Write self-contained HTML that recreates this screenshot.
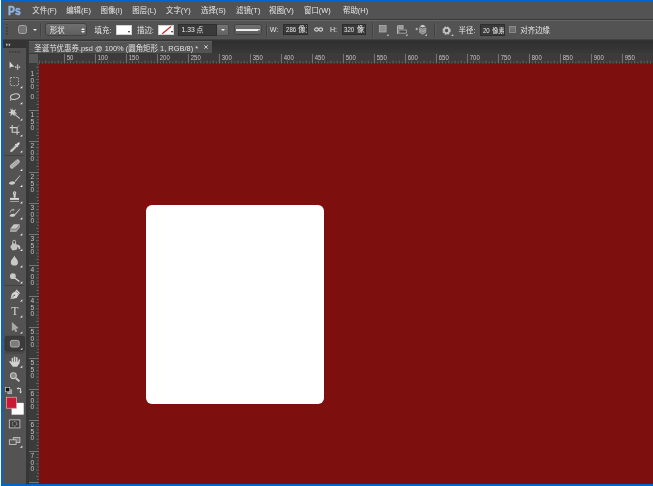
<!DOCTYPE html>
<html lang="zh-CN"><head><meta charset="utf-8"><title>Ps</title><style>
*{margin:0;padding:0;box-sizing:border-box}
html,body{width:653px;height:486px;overflow:hidden;background:#0066cc}
body{position:relative;will-change:transform;font-family:"Liberation Sans","Noto Sans CJK SC",sans-serif;font-size:7.44px;color:#e6e6e6;line-height:1}
.a{position:absolute}
.t{position:absolute;white-space:nowrap;line-height:10px;height:10px}
.sep{position:absolute;width:1px;background:#424242;box-shadow:1px 0 0 #5c5c5c}
.inp{position:absolute;background:#3a3a3a;border:1px solid #2e2e2e;overflow:hidden;white-space:nowrap;line-height:9px;color:#e8e8e8}
.btn{position:absolute;border:1px solid #424242;border-radius:2.5px;background:linear-gradient(#707070,#5e5e5e)}
svg{position:absolute;overflow:visible}
</style></head><body>
<div class="a" style="left:0;top:0;width:1px;height:486px;background:#fff"></div>
<div class="a" style="left:3px;top:2px;width:650px;height:482px;background:#535353"></div>
<div class="t" style="left:7.7px;top:2.9px;font-size:13.6px;line-height:15px;height:15px;color:#8db4e4;font-weight:bold;transform-origin:0 0;transform:scaleX(0.76);-webkit-text-stroke:0.5px #8db4e4">Ps</div>
<div class="t" style="left:32.3px;top:6px">文件(F)</div>
<div class="t" style="left:66.2px;top:6px">编辑(E)</div>
<div class="t" style="left:100.5px;top:6px">图像(I)</div>
<div class="t" style="left:132.3px;top:6px">图层(L)</div>
<div class="t" style="left:166px;top:6px">文字(Y)</div>
<div class="t" style="left:201px;top:6px">选择(S)</div>
<div class="t" style="left:236px;top:6px">滤镜(T)</div>
<div class="t" style="left:269px;top:6px">视图(V)</div>
<div class="t" style="left:304px;top:6px">窗口(W)</div>
<div class="t" style="left:343px;top:6px">帮助(H)</div>
<div class="a" style="left:3px;top:18.8px;width:650px;height:1px;background:#393939"></div>
<div class="a" style="left:3px;top:20.1px;width:650px;height:0.9px;background:#676767"></div>
<div class="a" style="left:6.3px;top:24px;width:1.6px;height:11px;background:repeating-linear-gradient(#424242 0 1.5px,transparent 1.5px 3.1px)"></div>
<div class="a" style="left:18px;top:25.4px;width:9px;height:8.5px;border:1px solid #a6a6a6;border-radius:2.5px;background:#747474"></div>
<div class="a" style="left:32.6px;top:28.8px;width:0;height:0;border-left:2.1px solid transparent;border-right:2.1px solid transparent;border-top:2.6px solid #ececec"></div>
<div class="sep" style="left:39.9px;top:22.8px;height:14.4px"></div>
<div class="btn" style="left:44.6px;top:23.4px;width:42.9px;height:13px;border-radius:3px"></div>
<div class="t" style="left:49.8px;top:25.8px">形状</div>
<div class="a" style="left:80.5px;top:27.6px;width:0;height:0;border-left:2px solid transparent;border-right:2px solid transparent;border-bottom:2.4px solid #efefef"></div>
<div class="a" style="left:80.5px;top:31.2px;width:0;height:0;border-left:2px solid transparent;border-right:2px solid transparent;border-top:2.4px solid #efefef"></div>
<div class="t" style="left:94.6px;top:25.8px">填充:</div>
<div class="a" style="left:115.8px;top:24.7px;width:16.3px;height:10.4px;background:#fff;border:1px solid #d0d0d0"></div>
<div class="a" style="left:128.2px;top:30.8px;width:0;height:0;border-left:1.5px solid transparent;border-right:1.5px solid transparent;border-top:2.1px solid #222"></div>
<div class="t" style="left:137px;top:25.8px">描边:</div>
<div class="a" style="left:157.7px;top:24.7px;width:16.5px;height:10.4px;background:#fff;border:1px solid #d0d0d0"></div>
<svg style="left:157.7px;top:24.7px" width="16.5" height="10.4"><line x1="4.2" y1="8.8" x2="13" y2="1.5" stroke="#cc2a2a" stroke-width="1.25"/></svg>
<div class="a" style="left:170.8px;top:30.8px;width:0;height:0;border-left:1.5px solid transparent;border-right:1.5px solid transparent;border-top:2.1px solid #222"></div>
<div class="inp" style="left:178.1px;top:23.7px;width:39px;height:12.1px;padding-left:2.4px;font-size:6.8px;line-height:10.4px">1.33 点</div>
<div class="a" style="left:216.7px;top:23.7px;width:12.4px;height:12.1px;border-radius:0 2px 2px 0;background:linear-gradient(#747474,#636363);border:1px solid #4a4a4a;border-left:none"></div>
<div class="a" style="left:220.6px;top:29px;width:0;height:0;border-left:2.1px solid transparent;border-right:2.1px solid transparent;border-top:2.5px solid #efefef"></div>
<div class="btn" style="left:233.7px;top:24px;width:28.8px;height:11.3px"></div>
<div class="a" style="left:236px;top:29px;width:21.8px;height:1.6px;background:#ececec"></div>
<div class="a" style="left:257.8px;top:29.1px;width:0;height:0;border-left:1.7px solid transparent;border-right:1.7px solid transparent;border-top:2.1px solid #efefef"></div>
<div class="sep" style="left:265.6px;top:22.8px;height:14.4px"></div>
<div class="t" style="left:269.8px;top:24.8px;font-size:7.1px;color:#e2e2e2">W:</div>
<div class="inp" style="left:283px;top:24px;width:25.1px;height:10.8px;padding-left:2px;line-height:9.6px"><span style="display:inline-block;transform:scale(.82,1.06);transform-origin:0 60%;margin-right:-2.2px">286</span> 像素</div>
<svg style="left:314px;top:27.4px" width="10" height="5"><ellipse cx="2.5" cy="2.5" rx="1.9" ry="1.6" fill="none" stroke="#d4d4d4" stroke-width="1.1"/><ellipse cx="6.7" cy="2.5" rx="1.9" ry="1.6" fill="none" stroke="#d4d4d4" stroke-width="1.1"/></svg>
<div class="t" style="left:329.9px;top:24.8px;font-size:7.1px;color:#e2e2e2">H:</div>
<div class="inp" style="left:342.1px;top:24px;width:24px;height:10.8px;padding-left:1.4px;line-height:9.6px"><span style="display:inline-block;transform:scale(.82,1.06);transform-origin:0 60%;margin-right:-2.2px">320</span> 像素</div>
<div class="sep" style="left:371.9px;top:22.8px;height:14.4px"></div>
<svg style="left:378px;top:24px" width="12" height="12"><rect x="1.3" y="1.5" width="6.8" height="6.5" fill="#8e8e8e" stroke="#b6b6b6" stroke-width="0.7"/><path d="M8.6 11.8h1.9v-1.9z" fill="#ececec"/></svg>
<svg style="left:396px;top:24px" width="13" height="12"><path d="M1.6 1.4v8.6" stroke="#cdcdcd" stroke-width="0.9"/><rect x="2.9" y="1.6" width="4.2" height="3.2" fill="#9a9a9a" stroke="#c4c4c4" stroke-width="0.6"/><rect x="2.9" y="6" width="7.4" height="3.1" fill="#474747" stroke="#c4c4c4" stroke-width="0.7"/><path d="M9.6 11.8h1.9v-1.9z" fill="#ececec"/></svg>
<svg style="left:415px;top:24px" width="13" height="12"><path d="M7.7 0.8l3.1 1.4-3.1 1.400-3.100-1.400z" fill="#cfcfcf"/><path d="M4.600 3.700l3.100 1.400 3.100-1.400v4.800l-3.100 1.700-3.100-1.700z" fill="#8a8a8a" stroke="#b8b8b8" stroke-width="0.600"/><path d="M4.600 6.200l3.100 1.400 3.100-1.400" fill="none" stroke="#c8c8c8" stroke-width="0.500"/><path d="M0.500 5h2.600M1.800 3.800v2.400" stroke="#d0d0d0" stroke-width="0.800"/><path d="M9.900 11.800h1.900v-1.900z" fill="#ececec"/></svg>
<div class="sep" style="left:434.2px;top:22.8px;height:14.4px"></div>
<svg style="left:441.5px;top:25.5px" width="12" height="11"><circle cx="4.6" cy="4.6" r="3" fill="none" stroke="#c2c2c2" stroke-width="2.4" stroke-dasharray="1.5 0.86"/><circle cx="4.6" cy="4.6" r="2.6" fill="none" stroke="#c2c2c2" stroke-width="1.6"/><path d="M9.2 10h2v-2z" fill="#e0e0e0"/></svg>
<div class="t" style="left:458.6px;top:25.8px">半径:</div>
<div class="inp" style="left:480.3px;top:23.8px;width:25.1px;height:11.8px;padding-left:1.5px;padding-top:1.2px;font-size:6.7px;line-height:10.2px"><span style="display:inline-block;transform:scale(.9,1.1);transform-origin:0 60%;margin-right:-0.2px">20</span> 像素</div>
<div class="a" style="left:508.7px;top:25.8px;width:7.5px;height:7.7px;background:linear-gradient(#787878,#666);border:1px solid #8a8a8a"></div>
<div class="t" style="left:520.3px;top:25.8px">对齐边缘</div>
<div class="a" style="left:3px;top:39.2px;width:650px;height:1.8px;background:linear-gradient(#484848,#2d2d2d)"></div>
<div class="a" style="left:26px;top:41px;width:627px;height:12.5px;background:linear-gradient(#2f2f2f,#393939)"></div>
<div class="a" style="left:28.7px;top:41px;width:183.3px;height:12.2px;background:#535353;border-top:1px solid #606060"></div>
<div class="t" style="left:34.3px;top:43.6px;color:#e2e2e2">圣诞节优惠券.psd @ 100% (圆角矩形 1, RGB/8) *</div>
<svg style="left:203.8px;top:45.3px" width="4" height="4"><path d="M0.3 0.3l3.4 3.4M3.7 0.3l-3.4 3.4" stroke="#dedede" stroke-width="0.85"/></svg>
<div class="a" style="left:3px;top:40.6px;width:23.3px;height:7.3px;background:#343434"></div>
<svg style="left:5.5px;top:43px" width="6" height="4"><path d="M0.3 0.3L2 1.8 0.3 3.3zM2.8 0.3L4.5 1.8 2.8 3.3z" fill="#d8d8d8"/></svg>
<div class="a" style="left:3px;top:47.9px;width:23.3px;height:436.1px;background:#535353"></div>
<div class="a" style="left:26.3px;top:40.6px;width:2.5px;height:443.4px;background:#363636"></div>
<svg style="left:9.4px;top:50.9px" width="12" height="2"><path d="M0 0.9h11.6" stroke="#3d3d3d" stroke-width="1.6" stroke-dasharray="0.9 0.62"/></svg>
<svg style="left:0;top:0" width="30" height="486" viewBox="0 0 30 486">
<g fill="#d6d6d6" stroke="none">
<!-- separators -->
<rect x="4.7" y="155" width="19" height="0.9" fill="#404040"/>
<rect x="4.7" y="285" width="19" height="0.9" fill="#404040"/>
<rect x="4.7" y="352.6" width="19" height="0.9" fill="#404040"/>
<!-- corner triangles -->
<g fill="#f6f6f6">
<path d="M22.300 86.0v2.200h-2.200z"/><path d="M22.300 102.0v2.200h-2.200z"/><path d="M22.300 118.4v2.200h-2.200z"/><path d="M22.300 134.4v2.200h-2.200z"/><path d="M22.300 150.4v2.200h-2.200z"/>
<path d="M22.300 168.8v2.200h-2.200z"/><path d="M22.300 184.8v2.200h-2.200z"/><path d="M22.300 201.2v2.200h-2.200z"/><path d="M22.300 217.2v2.200h-2.200z"/><path d="M22.300 233.2v2.200h-2.200z"/><path d="M22.300 248.8v2.200h-2.200z"/><path d="M22.300 265.2v2.200h-2.200z"/><path d="M22.300 281.2v2.200h-2.200z"/>
<path d="M22.300 299.2v2.200h-2.200z"/><path d="M22.300 315.2v2.200h-2.200z"/><path d="M22.300 331.4v2.200h-2.200z"/><path d="M22.300 365.6v2.200h-2.200z"/><path d="M22.300 445.6v2.200h-2.200z"/>
</g>
<!-- move -->
<path d="M9.600 61.400v6.800l1.700-1.500h3z"/>
<path d="M17.600 64.200l1.100 1.300h-.700v1.200h1.200v-.700l1.300 1.100-1.300 1.100v-.700h-1.200v1.200h.700l-1.100 1.300-1.100-1.300h.700v-1.200h-1.200v.700l-1.300-1.100 1.300-1.100v.700h1.200v-1.200h-.700z" fill="#cfcfcf"/>
<!-- marquee -->
<rect x="10.3" y="77.500" width="8.200" height="8.100" fill="none" stroke="#b8b8b8" stroke-width="0.850" stroke-dasharray="1.700 1.100"/>
<!-- lasso -->
<ellipse cx="15" cy="96.6" rx="4.6" ry="2.7" fill="none" stroke="#d0d0d0" stroke-width="1" transform="rotate(-12 15 96.6)"/>
<path d="M11.6 98.6c-1.2.4-1.6 1.6-.6 2.4" fill="none" stroke="#d0d0d0" stroke-width="0.9"/>
<!-- wand -->
<g transform="translate(12.500 112.400) scale(1.400) translate(-12.400 -112.400)"><path d="M12.400 109l.700 2 2-.800-1.100 1.800 1.800 1.200-2.100.100.100 2.100-1.300-1.600-1.700 1.300.600-2-2-.700 2-.700-.700-2 1.700 1.200z" fill="#cdcdcd"/></g>
<path d="M14.200 113.900l5.600 4.700" stroke="#c8c8c8" stroke-width="1.100" fill="none"/>
<!-- crop -->
<path d="M12.200 125v7.300h7.400M9.800 127.600h7.300v7.200" fill="none" stroke="#d0d0d0" stroke-width="1.100"/>
<path d="M19.400 125.200l-3 3" stroke="#bdbdbd" stroke-width="0.600" fill="none"/>
<!-- eyedropper -->
<path d="M19.300 142.300c.800.800.500 1.700-.200 2.400l-1.300 1.300.500.500-.800.800-.500-.500-4.600 4.600-1.700.500-.500-.500.500-1.700 4.600-4.600-.500-.500.800-.800.500.500 1.300-1.300c.700-.700 1.600-1 2.400-.200z"/>
<path d="M11.600 149.700l4.300-4.300" stroke="#5a5a5a" stroke-width="0.600" fill="none"/>
<!-- healing -->
<g transform="rotate(-41 14.800 164)"><rect x="9" y="161.700" width="11.600" height="4.600" rx="2.200" fill="#bcbcbc"/><path d="M11.500 161.800v4.400M13.200 161.800v4.400M14.900 161.800v4.400M16.600 161.800v4.400M18.300 161.800v4.400" stroke="#7a7a7a" stroke-width="0.500"/></g>
<!-- brush -->
<path d="M20 175.200l-5.300 5.800.800.700 5-6.100z" fill="#c4c4c4"/>
<path d="M8.900 183.700c.500-1.700 2.600-2.500 4.600-2.300 1.200.100 1.800.800 1.500 1.700-.600 1.600-3.700 2.200-6.100.600z" fill="#cccccc"/>
<!-- stamp -->
<path d="M14.600 191.300a1.700 1.700 0 0 1 1.700 1.700c0 .800-.600 1.200-.700 2.200l-.100 2.600h-1.800l-.100-2.600c-.100-1-.700-1.400-.700-2.200a1.700 1.700 0 0 1 1.700-1.700z"/>
<circle cx="14.600" cy="193" r="0.700" fill="#6a6a6a"/>
<rect x="10" y="197.900" width="9" height="2"/>
<rect x="10" y="201.100" width="9" height="0.800" fill="#b4b4b4"/>
<!-- history brush -->
<path d="M19.900 208.600l-5.300 5.600.800.700 5-5.900z" fill="#c4c4c4"/>
<path d="M9.600 215.900c.500-1.600 2.400-2.300 4.200-2.100 1.100.100 1.600.800 1.300 1.600-.500 1.400-3.300 2-5.500.500z" fill="#cccccc"/>
<path d="M10 212.400a3.200 3.200 0 0 1 3.400-2.700" fill="none" stroke="#bebebe" stroke-width="0.850"/>
<path d="M12.800 208.600l2 1.300-2.200.900z" fill="#c4c4c4"/>
<!-- eraser -->
<path d="M13.800 224.200h6.100l-3.700 4.600h-6.100z" fill="#c6c6c6"/>
<path d="M10.100 229.200h6.100l3.700-4.600v2.900l-3.700 4.600h-6.100z" fill="#a2a2a2"/>
<!-- bucket -->
<path d="M10.200 246.700l2.800-3.700 5.200 2.100-1.500 4.700-4.300.700z" fill="#c2c2c2"/>
<path d="M12.700 244.600v-2.900a1.450 1.450 0 0 1 2.900 0v2.700" fill="none" stroke="#cccccc" stroke-width="0.900"/>
<path d="M18 244.700c1.600.600 2.400 1.700 2.300 3.700a.950.950 0 0 1-1.800.200c0-1.200-.500-2-1.500-2.500z" fill="#d0d0d0"/>
<!-- blur drop -->
<path d="M14.400 255.800c1.200 2.400 3.600 4.200 3.600 6.400a3.600 3.400 0 0 1-7.200 0c0-2.200 2.400-4 3.600-6.400z" fill="#c9c9c9"/>
<!-- dodge -->
<circle cx="12.900" cy="276.200" r="2.900" fill="#c9c9c9"/>
<path d="M15 278.200l4.400 3.400" stroke="#d6d6d6" stroke-width="1.300" fill="none"/>
<!-- pen -->
<path d="M10.400 299.200l1.600-5.800 3.800-2.400 3.200 3.200-2.400 3.800z"/>
<path d="M10.800 298.800l3.200-3.200" stroke="#535353" stroke-width="0.700"/>
<circle cx="14.300" cy="295.300" r="0.800" fill="#535353"/>
<path d="M16.600 289.600l3.600 3.600-1 .9-3.600-3.600z"/>
<!-- T -->
<text x="11.200" y="315.300" font-family='"Liberation Serif",serif' font-size="11.800" fill="#d6d6d6">T</text>
<!-- path select -->
<path d="M12.200 322.400v8.400l2-1.800 1.500 2.900 1.300-.700-1.500-2.800 2.700-.300z" fill="#a9a9a9" stroke="#c4c4c4" stroke-width="0.400"/>
<!-- selected shape tool -->
<rect x="5" y="336.200" width="19.600" height="15" rx="1.600" fill="#3b3b3b" stroke="#303030" stroke-width="0.600"/>
<rect x="10.400" y="340.400" width="8.800" height="6.600" rx="1.600" fill="#7c7c7c" stroke="#b8b8b8" stroke-width="0.900"/>
<path d="M22.400 347.800v2h-2z" fill="#ededed"/>
<!-- hand -->
<g stroke="#d2d2d2" stroke-width="1.5" stroke-linecap="round" fill="none"><path d="M12.400 358.500v4"/><path d="M14.600 357.200v5"/><path d="M16.800 357.800v4.500"/><path d="M19.300 360l-.700 3.500"/><path d="M10.100 361.700l2.200 2.800"/></g>
<path d="M11.700 361.800h7.500l-.700 2.800-1.300 2.200h-4.400l-1.500-2.800z" fill="#d2d2d2"/>
<!-- zoom -->
<circle cx="13.400" cy="375.700" r="2.900" fill="#868686" stroke="#c6c6c6" stroke-width="1.100"/>
<path d="M15.900 378.200l3.600 3.200" stroke="#cecece" stroke-width="1.900" fill="none"/>
<!-- default colours -->
<rect x="7.800" y="389.800" width="4" height="4" fill="#9a9a9a" stroke="#c8c8c8" stroke-width="0.500"/>
<rect x="5.600" y="387.600" width="4.200" height="4.200" fill="#111" stroke="#d8d8d8" stroke-width="0.600"/>
<!-- swap arrows -->
<path d="M18.400 388.400h2.200v3.200" fill="none" stroke="#e0e0e0" stroke-width="0.900"/>
<path d="M16.600 388.400l2-1.400v2.800zM20.600 393.400l-1.400-2h2.800z" fill="#e0e0e0"/>
<!-- colour swatches -->
<rect x="11.800" y="403" width="11.900" height="11.600" fill="#fff" stroke="#dcdcdc" stroke-width="0.300"/>
<rect x="6.100" y="396.900" width="10.600" height="11.600" fill="#c81a34"/>
<rect x="6.400" y="397.200" width="10" height="11" fill="none" stroke="#e6c8cc" stroke-width="0.600"/>
<!-- quick mask -->
<rect x="9.300" y="419.900" width="10.600" height="8" fill="#3e3e3e" stroke="#cfcfcf" stroke-width="0.800"/>
<circle cx="14.600" cy="423.900" r="2.300" fill="none" stroke="#c8c8c8" stroke-width="0.800" stroke-dasharray="1.300 1"/>
<!-- screen mode -->
<rect x="13.300" y="437.600" width="6.600" height="5" fill="#777" stroke="#cfcfcf" stroke-width="0.800"/>
<rect x="9.300" y="439.800" width="6.800" height="4.800" fill="#5a5a5a" stroke="#cfcfcf" stroke-width="0.800"/>
</g>
</svg>

<div class="a" style="left:28.8px;top:53.4px;width:624.2px;height:10.2px;background:#3b3b3b"></div>
<div class="a" style="left:28.8px;top:63.4px;width:10.2px;height:420.6px;background:#3b3b3b"></div>
<div class="a" style="left:28.8px;top:53.6px;width:9.6px;height:9.5px;background:#585858"></div>
<div class="a" style="left:38.8px;top:63.3px;width:614.2px;height:420.7px;background:#7d100f"></div>
<div class="a" style="left:146px;top:204.5px;width:177.5px;height:199px;background:#fff;border-radius:6px"></div>
<svg style="left:0;top:0" width="653" height="486"><rect x="39.20" y="60.6" width="0.8" height="3" fill="#7c7c7c" opacity="0.8"/><rect x="42.30" y="61.6" width="0.8" height="2" fill="#7c7c7c" opacity="0.7"/><rect x="45.40" y="60.6" width="0.8" height="3" fill="#7c7c7c" opacity="0.8"/><rect x="48.50" y="61.6" width="0.8" height="2" fill="#7c7c7c" opacity="0.7"/><rect x="51.60" y="60.6" width="0.8" height="3" fill="#7c7c7c" opacity="0.8"/><rect x="54.70" y="61.6" width="0.8" height="2" fill="#7c7c7c" opacity="0.7"/><rect x="57.80" y="60.6" width="0.8" height="3" fill="#7c7c7c" opacity="0.8"/><rect x="60.90" y="61.6" width="0.8" height="2" fill="#7c7c7c" opacity="0.7"/><rect x="63.95" y="53.9" width="0.9" height="9.6" fill="#7c7c7c"/><rect x="67.10" y="61.6" width="0.8" height="2" fill="#7c7c7c" opacity="0.7"/><rect x="70.20" y="60.6" width="0.8" height="3" fill="#7c7c7c" opacity="0.8"/><rect x="73.30" y="61.6" width="0.8" height="2" fill="#7c7c7c" opacity="0.7"/><rect x="76.40" y="60.6" width="0.8" height="3" fill="#7c7c7c" opacity="0.8"/><rect x="79.50" y="61.6" width="0.8" height="2" fill="#7c7c7c" opacity="0.7"/><rect x="82.60" y="60.6" width="0.8" height="3" fill="#7c7c7c" opacity="0.8"/><rect x="85.70" y="61.6" width="0.8" height="2" fill="#7c7c7c" opacity="0.7"/><rect x="88.80" y="60.6" width="0.8" height="3" fill="#7c7c7c" opacity="0.8"/><rect x="91.90" y="61.6" width="0.8" height="2" fill="#7c7c7c" opacity="0.7"/><rect x="94.95" y="53.9" width="0.9" height="9.6" fill="#7c7c7c"/><rect x="98.10" y="61.6" width="0.8" height="2" fill="#7c7c7c" opacity="0.7"/><rect x="101.20" y="60.6" width="0.8" height="3" fill="#7c7c7c" opacity="0.8"/><rect x="104.30" y="61.6" width="0.8" height="2" fill="#7c7c7c" opacity="0.7"/><rect x="107.40" y="60.6" width="0.8" height="3" fill="#7c7c7c" opacity="0.8"/><rect x="110.50" y="61.6" width="0.8" height="2" fill="#7c7c7c" opacity="0.7"/><rect x="113.60" y="60.6" width="0.8" height="3" fill="#7c7c7c" opacity="0.8"/><rect x="116.70" y="61.6" width="0.8" height="2" fill="#7c7c7c" opacity="0.7"/><rect x="119.80" y="60.6" width="0.8" height="3" fill="#7c7c7c" opacity="0.8"/><rect x="122.90" y="61.6" width="0.8" height="2" fill="#7c7c7c" opacity="0.7"/><rect x="125.95" y="53.9" width="0.9" height="9.6" fill="#7c7c7c"/><rect x="129.10" y="61.6" width="0.8" height="2" fill="#7c7c7c" opacity="0.7"/><rect x="132.20" y="60.6" width="0.8" height="3" fill="#7c7c7c" opacity="0.8"/><rect x="135.30" y="61.6" width="0.8" height="2" fill="#7c7c7c" opacity="0.7"/><rect x="138.40" y="60.6" width="0.8" height="3" fill="#7c7c7c" opacity="0.8"/><rect x="141.50" y="61.6" width="0.8" height="2" fill="#7c7c7c" opacity="0.7"/><rect x="144.60" y="60.6" width="0.8" height="3" fill="#7c7c7c" opacity="0.8"/><rect x="147.70" y="61.6" width="0.8" height="2" fill="#7c7c7c" opacity="0.7"/><rect x="150.80" y="60.6" width="0.8" height="3" fill="#7c7c7c" opacity="0.8"/><rect x="153.90" y="61.6" width="0.8" height="2" fill="#7c7c7c" opacity="0.7"/><rect x="156.95" y="53.9" width="0.9" height="9.6" fill="#7c7c7c"/><rect x="160.10" y="61.6" width="0.8" height="2" fill="#7c7c7c" opacity="0.7"/><rect x="163.20" y="60.6" width="0.8" height="3" fill="#7c7c7c" opacity="0.8"/><rect x="166.30" y="61.6" width="0.8" height="2" fill="#7c7c7c" opacity="0.7"/><rect x="169.40" y="60.6" width="0.8" height="3" fill="#7c7c7c" opacity="0.8"/><rect x="172.50" y="61.6" width="0.8" height="2" fill="#7c7c7c" opacity="0.7"/><rect x="175.60" y="60.6" width="0.8" height="3" fill="#7c7c7c" opacity="0.8"/><rect x="178.70" y="61.6" width="0.8" height="2" fill="#7c7c7c" opacity="0.7"/><rect x="181.80" y="60.6" width="0.8" height="3" fill="#7c7c7c" opacity="0.8"/><rect x="184.90" y="61.6" width="0.8" height="2" fill="#7c7c7c" opacity="0.7"/><rect x="187.95" y="53.9" width="0.9" height="9.6" fill="#7c7c7c"/><rect x="191.10" y="61.6" width="0.8" height="2" fill="#7c7c7c" opacity="0.7"/><rect x="194.20" y="60.6" width="0.8" height="3" fill="#7c7c7c" opacity="0.8"/><rect x="197.30" y="61.6" width="0.8" height="2" fill="#7c7c7c" opacity="0.7"/><rect x="200.40" y="60.6" width="0.8" height="3" fill="#7c7c7c" opacity="0.8"/><rect x="203.50" y="61.6" width="0.8" height="2" fill="#7c7c7c" opacity="0.7"/><rect x="206.60" y="60.6" width="0.8" height="3" fill="#7c7c7c" opacity="0.8"/><rect x="209.70" y="61.6" width="0.8" height="2" fill="#7c7c7c" opacity="0.7"/><rect x="212.80" y="60.6" width="0.8" height="3" fill="#7c7c7c" opacity="0.8"/><rect x="215.90" y="61.6" width="0.8" height="2" fill="#7c7c7c" opacity="0.7"/><rect x="218.95" y="53.9" width="0.9" height="9.6" fill="#7c7c7c"/><rect x="222.10" y="61.6" width="0.8" height="2" fill="#7c7c7c" opacity="0.7"/><rect x="225.20" y="60.6" width="0.8" height="3" fill="#7c7c7c" opacity="0.8"/><rect x="228.30" y="61.6" width="0.8" height="2" fill="#7c7c7c" opacity="0.7"/><rect x="231.40" y="60.6" width="0.8" height="3" fill="#7c7c7c" opacity="0.8"/><rect x="234.50" y="61.6" width="0.8" height="2" fill="#7c7c7c" opacity="0.7"/><rect x="237.60" y="60.6" width="0.8" height="3" fill="#7c7c7c" opacity="0.8"/><rect x="240.70" y="61.6" width="0.8" height="2" fill="#7c7c7c" opacity="0.7"/><rect x="243.80" y="60.6" width="0.8" height="3" fill="#7c7c7c" opacity="0.8"/><rect x="246.90" y="61.6" width="0.8" height="2" fill="#7c7c7c" opacity="0.7"/><rect x="249.95" y="53.9" width="0.9" height="9.6" fill="#7c7c7c"/><rect x="253.10" y="61.6" width="0.8" height="2" fill="#7c7c7c" opacity="0.7"/><rect x="256.20" y="60.6" width="0.8" height="3" fill="#7c7c7c" opacity="0.8"/><rect x="259.30" y="61.6" width="0.8" height="2" fill="#7c7c7c" opacity="0.7"/><rect x="262.40" y="60.6" width="0.8" height="3" fill="#7c7c7c" opacity="0.8"/><rect x="265.50" y="61.6" width="0.8" height="2" fill="#7c7c7c" opacity="0.7"/><rect x="268.60" y="60.6" width="0.8" height="3" fill="#7c7c7c" opacity="0.8"/><rect x="271.70" y="61.6" width="0.8" height="2" fill="#7c7c7c" opacity="0.7"/><rect x="274.80" y="60.6" width="0.8" height="3" fill="#7c7c7c" opacity="0.8"/><rect x="277.90" y="61.6" width="0.8" height="2" fill="#7c7c7c" opacity="0.7"/><rect x="280.95" y="53.9" width="0.9" height="9.6" fill="#7c7c7c"/><rect x="284.10" y="61.6" width="0.8" height="2" fill="#7c7c7c" opacity="0.7"/><rect x="287.20" y="60.6" width="0.8" height="3" fill="#7c7c7c" opacity="0.8"/><rect x="290.30" y="61.6" width="0.8" height="2" fill="#7c7c7c" opacity="0.7"/><rect x="293.40" y="60.6" width="0.8" height="3" fill="#7c7c7c" opacity="0.8"/><rect x="296.50" y="61.6" width="0.8" height="2" fill="#7c7c7c" opacity="0.7"/><rect x="299.60" y="60.6" width="0.8" height="3" fill="#7c7c7c" opacity="0.8"/><rect x="302.70" y="61.6" width="0.8" height="2" fill="#7c7c7c" opacity="0.7"/><rect x="305.80" y="60.6" width="0.8" height="3" fill="#7c7c7c" opacity="0.8"/><rect x="308.90" y="61.6" width="0.8" height="2" fill="#7c7c7c" opacity="0.7"/><rect x="311.95" y="53.9" width="0.9" height="9.6" fill="#7c7c7c"/><rect x="315.10" y="61.6" width="0.8" height="2" fill="#7c7c7c" opacity="0.7"/><rect x="318.20" y="60.6" width="0.8" height="3" fill="#7c7c7c" opacity="0.8"/><rect x="321.30" y="61.6" width="0.8" height="2" fill="#7c7c7c" opacity="0.7"/><rect x="324.40" y="60.6" width="0.8" height="3" fill="#7c7c7c" opacity="0.8"/><rect x="327.50" y="61.6" width="0.8" height="2" fill="#7c7c7c" opacity="0.7"/><rect x="330.60" y="60.6" width="0.8" height="3" fill="#7c7c7c" opacity="0.8"/><rect x="333.70" y="61.6" width="0.8" height="2" fill="#7c7c7c" opacity="0.7"/><rect x="336.80" y="60.6" width="0.8" height="3" fill="#7c7c7c" opacity="0.8"/><rect x="339.90" y="61.6" width="0.8" height="2" fill="#7c7c7c" opacity="0.7"/><rect x="342.95" y="53.9" width="0.9" height="9.6" fill="#7c7c7c"/><rect x="346.10" y="61.6" width="0.8" height="2" fill="#7c7c7c" opacity="0.7"/><rect x="349.20" y="60.6" width="0.8" height="3" fill="#7c7c7c" opacity="0.8"/><rect x="352.30" y="61.6" width="0.8" height="2" fill="#7c7c7c" opacity="0.7"/><rect x="355.40" y="60.6" width="0.8" height="3" fill="#7c7c7c" opacity="0.8"/><rect x="358.50" y="61.6" width="0.8" height="2" fill="#7c7c7c" opacity="0.7"/><rect x="361.60" y="60.6" width="0.8" height="3" fill="#7c7c7c" opacity="0.8"/><rect x="364.70" y="61.6" width="0.8" height="2" fill="#7c7c7c" opacity="0.7"/><rect x="367.80" y="60.6" width="0.8" height="3" fill="#7c7c7c" opacity="0.8"/><rect x="370.90" y="61.6" width="0.8" height="2" fill="#7c7c7c" opacity="0.7"/><rect x="373.95" y="53.9" width="0.9" height="9.6" fill="#7c7c7c"/><rect x="377.10" y="61.6" width="0.8" height="2" fill="#7c7c7c" opacity="0.7"/><rect x="380.20" y="60.6" width="0.8" height="3" fill="#7c7c7c" opacity="0.8"/><rect x="383.30" y="61.6" width="0.8" height="2" fill="#7c7c7c" opacity="0.7"/><rect x="386.40" y="60.6" width="0.8" height="3" fill="#7c7c7c" opacity="0.8"/><rect x="389.50" y="61.6" width="0.8" height="2" fill="#7c7c7c" opacity="0.7"/><rect x="392.60" y="60.6" width="0.8" height="3" fill="#7c7c7c" opacity="0.8"/><rect x="395.70" y="61.6" width="0.8" height="2" fill="#7c7c7c" opacity="0.7"/><rect x="398.80" y="60.6" width="0.8" height="3" fill="#7c7c7c" opacity="0.8"/><rect x="401.90" y="61.6" width="0.8" height="2" fill="#7c7c7c" opacity="0.7"/><rect x="404.95" y="53.9" width="0.9" height="9.6" fill="#7c7c7c"/><rect x="408.10" y="61.6" width="0.8" height="2" fill="#7c7c7c" opacity="0.7"/><rect x="411.20" y="60.6" width="0.8" height="3" fill="#7c7c7c" opacity="0.8"/><rect x="414.30" y="61.6" width="0.8" height="2" fill="#7c7c7c" opacity="0.7"/><rect x="417.40" y="60.6" width="0.8" height="3" fill="#7c7c7c" opacity="0.8"/><rect x="420.50" y="61.6" width="0.8" height="2" fill="#7c7c7c" opacity="0.7"/><rect x="423.60" y="60.6" width="0.8" height="3" fill="#7c7c7c" opacity="0.8"/><rect x="426.70" y="61.6" width="0.8" height="2" fill="#7c7c7c" opacity="0.7"/><rect x="429.80" y="60.6" width="0.8" height="3" fill="#7c7c7c" opacity="0.8"/><rect x="432.90" y="61.6" width="0.8" height="2" fill="#7c7c7c" opacity="0.7"/><rect x="435.95" y="53.9" width="0.9" height="9.6" fill="#7c7c7c"/><rect x="439.10" y="61.6" width="0.8" height="2" fill="#7c7c7c" opacity="0.7"/><rect x="442.20" y="60.6" width="0.8" height="3" fill="#7c7c7c" opacity="0.8"/><rect x="445.30" y="61.6" width="0.8" height="2" fill="#7c7c7c" opacity="0.7"/><rect x="448.40" y="60.6" width="0.8" height="3" fill="#7c7c7c" opacity="0.8"/><rect x="451.50" y="61.6" width="0.8" height="2" fill="#7c7c7c" opacity="0.7"/><rect x="454.60" y="60.6" width="0.8" height="3" fill="#7c7c7c" opacity="0.8"/><rect x="457.70" y="61.6" width="0.8" height="2" fill="#7c7c7c" opacity="0.7"/><rect x="460.80" y="60.6" width="0.8" height="3" fill="#7c7c7c" opacity="0.8"/><rect x="463.90" y="61.6" width="0.8" height="2" fill="#7c7c7c" opacity="0.7"/><rect x="466.95" y="53.9" width="0.9" height="9.6" fill="#7c7c7c"/><rect x="470.10" y="61.6" width="0.8" height="2" fill="#7c7c7c" opacity="0.7"/><rect x="473.20" y="60.6" width="0.8" height="3" fill="#7c7c7c" opacity="0.8"/><rect x="476.30" y="61.6" width="0.8" height="2" fill="#7c7c7c" opacity="0.7"/><rect x="479.40" y="60.6" width="0.8" height="3" fill="#7c7c7c" opacity="0.8"/><rect x="482.50" y="61.6" width="0.8" height="2" fill="#7c7c7c" opacity="0.7"/><rect x="485.60" y="60.6" width="0.8" height="3" fill="#7c7c7c" opacity="0.8"/><rect x="488.70" y="61.6" width="0.8" height="2" fill="#7c7c7c" opacity="0.7"/><rect x="491.80" y="60.6" width="0.8" height="3" fill="#7c7c7c" opacity="0.8"/><rect x="494.90" y="61.6" width="0.8" height="2" fill="#7c7c7c" opacity="0.7"/><rect x="497.95" y="53.9" width="0.9" height="9.6" fill="#7c7c7c"/><rect x="501.10" y="61.6" width="0.8" height="2" fill="#7c7c7c" opacity="0.7"/><rect x="504.20" y="60.6" width="0.8" height="3" fill="#7c7c7c" opacity="0.8"/><rect x="507.30" y="61.6" width="0.8" height="2" fill="#7c7c7c" opacity="0.7"/><rect x="510.40" y="60.6" width="0.8" height="3" fill="#7c7c7c" opacity="0.8"/><rect x="513.50" y="61.6" width="0.8" height="2" fill="#7c7c7c" opacity="0.7"/><rect x="516.60" y="60.6" width="0.8" height="3" fill="#7c7c7c" opacity="0.8"/><rect x="519.70" y="61.6" width="0.8" height="2" fill="#7c7c7c" opacity="0.7"/><rect x="522.80" y="60.6" width="0.8" height="3" fill="#7c7c7c" opacity="0.8"/><rect x="525.90" y="61.6" width="0.8" height="2" fill="#7c7c7c" opacity="0.7"/><rect x="528.95" y="53.9" width="0.9" height="9.6" fill="#7c7c7c"/><rect x="532.10" y="61.6" width="0.8" height="2" fill="#7c7c7c" opacity="0.7"/><rect x="535.20" y="60.6" width="0.8" height="3" fill="#7c7c7c" opacity="0.8"/><rect x="538.30" y="61.6" width="0.8" height="2" fill="#7c7c7c" opacity="0.7"/><rect x="541.40" y="60.6" width="0.8" height="3" fill="#7c7c7c" opacity="0.8"/><rect x="544.50" y="61.6" width="0.8" height="2" fill="#7c7c7c" opacity="0.7"/><rect x="547.60" y="60.6" width="0.8" height="3" fill="#7c7c7c" opacity="0.8"/><rect x="550.70" y="61.6" width="0.8" height="2" fill="#7c7c7c" opacity="0.7"/><rect x="553.80" y="60.6" width="0.8" height="3" fill="#7c7c7c" opacity="0.8"/><rect x="556.90" y="61.6" width="0.8" height="2" fill="#7c7c7c" opacity="0.7"/><rect x="559.95" y="53.9" width="0.9" height="9.6" fill="#7c7c7c"/><rect x="563.10" y="61.6" width="0.8" height="2" fill="#7c7c7c" opacity="0.7"/><rect x="566.20" y="60.6" width="0.8" height="3" fill="#7c7c7c" opacity="0.8"/><rect x="569.30" y="61.6" width="0.8" height="2" fill="#7c7c7c" opacity="0.7"/><rect x="572.40" y="60.6" width="0.8" height="3" fill="#7c7c7c" opacity="0.8"/><rect x="575.50" y="61.6" width="0.8" height="2" fill="#7c7c7c" opacity="0.7"/><rect x="578.60" y="60.6" width="0.8" height="3" fill="#7c7c7c" opacity="0.8"/><rect x="581.70" y="61.6" width="0.8" height="2" fill="#7c7c7c" opacity="0.7"/><rect x="584.80" y="60.6" width="0.8" height="3" fill="#7c7c7c" opacity="0.8"/><rect x="587.90" y="61.6" width="0.8" height="2" fill="#7c7c7c" opacity="0.7"/><rect x="590.95" y="53.9" width="0.9" height="9.6" fill="#7c7c7c"/><rect x="594.10" y="61.6" width="0.8" height="2" fill="#7c7c7c" opacity="0.7"/><rect x="597.20" y="60.6" width="0.8" height="3" fill="#7c7c7c" opacity="0.8"/><rect x="600.30" y="61.6" width="0.8" height="2" fill="#7c7c7c" opacity="0.7"/><rect x="603.40" y="60.6" width="0.8" height="3" fill="#7c7c7c" opacity="0.8"/><rect x="606.50" y="61.6" width="0.8" height="2" fill="#7c7c7c" opacity="0.7"/><rect x="609.60" y="60.6" width="0.8" height="3" fill="#7c7c7c" opacity="0.8"/><rect x="612.70" y="61.6" width="0.8" height="2" fill="#7c7c7c" opacity="0.7"/><rect x="615.80" y="60.6" width="0.8" height="3" fill="#7c7c7c" opacity="0.8"/><rect x="618.90" y="61.6" width="0.8" height="2" fill="#7c7c7c" opacity="0.7"/><rect x="621.95" y="53.9" width="0.9" height="9.6" fill="#7c7c7c"/><rect x="625.10" y="61.6" width="0.8" height="2" fill="#7c7c7c" opacity="0.7"/><rect x="628.20" y="60.6" width="0.8" height="3" fill="#7c7c7c" opacity="0.8"/><rect x="631.30" y="61.6" width="0.8" height="2" fill="#7c7c7c" opacity="0.7"/><rect x="634.40" y="60.6" width="0.8" height="3" fill="#7c7c7c" opacity="0.8"/><rect x="637.50" y="61.6" width="0.8" height="2" fill="#7c7c7c" opacity="0.7"/><rect x="640.60" y="60.6" width="0.8" height="3" fill="#7c7c7c" opacity="0.8"/><rect x="643.70" y="61.6" width="0.8" height="2" fill="#7c7c7c" opacity="0.7"/><rect x="646.80" y="60.6" width="0.8" height="3" fill="#7c7c7c" opacity="0.8"/><rect x="649.90" y="61.6" width="0.8" height="2" fill="#7c7c7c" opacity="0.7"/><rect x="37" y="63.60" width="2" height="0.8" fill="#7c7c7c" opacity="0.7"/><rect x="36" y="66.70" width="3" height="0.8" fill="#7c7c7c" opacity="0.8"/><rect x="37" y="69.80" width="2" height="0.8" fill="#7c7c7c" opacity="0.7"/><rect x="36" y="72.90" width="3" height="0.8" fill="#7c7c7c" opacity="0.8"/><rect x="37" y="76.00" width="2" height="0.8" fill="#7c7c7c" opacity="0.7"/><rect x="36" y="79.10" width="3" height="0.8" fill="#7c7c7c" opacity="0.8"/><rect x="37" y="82.20" width="2" height="0.8" fill="#7c7c7c" opacity="0.7"/><rect x="36" y="85.30" width="3" height="0.8" fill="#7c7c7c" opacity="0.8"/><rect x="37" y="88.40" width="2" height="0.8" fill="#7c7c7c" opacity="0.7"/><rect x="36" y="91.50" width="3" height="0.8" fill="#7c7c7c" opacity="0.8"/><rect x="37" y="94.60" width="2" height="0.8" fill="#7c7c7c" opacity="0.7"/><rect x="36" y="97.70" width="3" height="0.8" fill="#7c7c7c" opacity="0.8"/><rect x="37" y="100.80" width="2" height="0.8" fill="#7c7c7c" opacity="0.7"/><rect x="36" y="103.90" width="3" height="0.8" fill="#7c7c7c" opacity="0.8"/><rect x="37" y="107.00" width="2" height="0.8" fill="#7c7c7c" opacity="0.7"/><rect x="29" y="110.05" width="10" height="0.9" fill="#7c7c7c"/><rect x="37" y="113.20" width="2" height="0.8" fill="#7c7c7c" opacity="0.7"/><rect x="36" y="116.30" width="3" height="0.8" fill="#7c7c7c" opacity="0.8"/><rect x="37" y="119.40" width="2" height="0.8" fill="#7c7c7c" opacity="0.7"/><rect x="36" y="122.50" width="3" height="0.8" fill="#7c7c7c" opacity="0.8"/><rect x="37" y="125.60" width="2" height="0.8" fill="#7c7c7c" opacity="0.7"/><rect x="36" y="128.70" width="3" height="0.8" fill="#7c7c7c" opacity="0.8"/><rect x="37" y="131.80" width="2" height="0.8" fill="#7c7c7c" opacity="0.7"/><rect x="36" y="134.90" width="3" height="0.8" fill="#7c7c7c" opacity="0.8"/><rect x="37" y="138.00" width="2" height="0.8" fill="#7c7c7c" opacity="0.7"/><rect x="29" y="141.05" width="10" height="0.9" fill="#7c7c7c"/><rect x="37" y="144.20" width="2" height="0.8" fill="#7c7c7c" opacity="0.7"/><rect x="36" y="147.30" width="3" height="0.8" fill="#7c7c7c" opacity="0.8"/><rect x="37" y="150.40" width="2" height="0.8" fill="#7c7c7c" opacity="0.7"/><rect x="36" y="153.50" width="3" height="0.8" fill="#7c7c7c" opacity="0.8"/><rect x="37" y="156.60" width="2" height="0.8" fill="#7c7c7c" opacity="0.7"/><rect x="36" y="159.70" width="3" height="0.8" fill="#7c7c7c" opacity="0.8"/><rect x="37" y="162.80" width="2" height="0.8" fill="#7c7c7c" opacity="0.7"/><rect x="36" y="165.90" width="3" height="0.8" fill="#7c7c7c" opacity="0.8"/><rect x="37" y="169.00" width="2" height="0.8" fill="#7c7c7c" opacity="0.7"/><rect x="29" y="172.05" width="10" height="0.9" fill="#7c7c7c"/><rect x="37" y="175.20" width="2" height="0.8" fill="#7c7c7c" opacity="0.7"/><rect x="36" y="178.30" width="3" height="0.8" fill="#7c7c7c" opacity="0.8"/><rect x="37" y="181.40" width="2" height="0.8" fill="#7c7c7c" opacity="0.7"/><rect x="36" y="184.50" width="3" height="0.8" fill="#7c7c7c" opacity="0.8"/><rect x="37" y="187.60" width="2" height="0.8" fill="#7c7c7c" opacity="0.7"/><rect x="36" y="190.70" width="3" height="0.8" fill="#7c7c7c" opacity="0.8"/><rect x="37" y="193.80" width="2" height="0.8" fill="#7c7c7c" opacity="0.7"/><rect x="36" y="196.90" width="3" height="0.8" fill="#7c7c7c" opacity="0.8"/><rect x="37" y="200.00" width="2" height="0.8" fill="#7c7c7c" opacity="0.7"/><rect x="29" y="203.05" width="10" height="0.9" fill="#7c7c7c"/><rect x="37" y="206.20" width="2" height="0.8" fill="#7c7c7c" opacity="0.7"/><rect x="36" y="209.30" width="3" height="0.8" fill="#7c7c7c" opacity="0.8"/><rect x="37" y="212.40" width="2" height="0.8" fill="#7c7c7c" opacity="0.7"/><rect x="36" y="215.50" width="3" height="0.8" fill="#7c7c7c" opacity="0.8"/><rect x="37" y="218.60" width="2" height="0.8" fill="#7c7c7c" opacity="0.7"/><rect x="36" y="221.70" width="3" height="0.8" fill="#7c7c7c" opacity="0.8"/><rect x="37" y="224.80" width="2" height="0.8" fill="#7c7c7c" opacity="0.7"/><rect x="36" y="227.90" width="3" height="0.8" fill="#7c7c7c" opacity="0.8"/><rect x="37" y="231.00" width="2" height="0.8" fill="#7c7c7c" opacity="0.7"/><rect x="29" y="234.05" width="10" height="0.9" fill="#7c7c7c"/><rect x="37" y="237.20" width="2" height="0.8" fill="#7c7c7c" opacity="0.7"/><rect x="36" y="240.30" width="3" height="0.8" fill="#7c7c7c" opacity="0.8"/><rect x="37" y="243.40" width="2" height="0.8" fill="#7c7c7c" opacity="0.7"/><rect x="36" y="246.50" width="3" height="0.8" fill="#7c7c7c" opacity="0.8"/><rect x="37" y="249.60" width="2" height="0.8" fill="#7c7c7c" opacity="0.7"/><rect x="36" y="252.70" width="3" height="0.8" fill="#7c7c7c" opacity="0.8"/><rect x="37" y="255.80" width="2" height="0.8" fill="#7c7c7c" opacity="0.7"/><rect x="36" y="258.90" width="3" height="0.8" fill="#7c7c7c" opacity="0.8"/><rect x="37" y="262.00" width="2" height="0.8" fill="#7c7c7c" opacity="0.7"/><rect x="29" y="265.05" width="10" height="0.9" fill="#7c7c7c"/><rect x="37" y="268.20" width="2" height="0.8" fill="#7c7c7c" opacity="0.7"/><rect x="36" y="271.30" width="3" height="0.8" fill="#7c7c7c" opacity="0.8"/><rect x="37" y="274.40" width="2" height="0.8" fill="#7c7c7c" opacity="0.7"/><rect x="36" y="277.50" width="3" height="0.8" fill="#7c7c7c" opacity="0.8"/><rect x="37" y="280.60" width="2" height="0.8" fill="#7c7c7c" opacity="0.7"/><rect x="36" y="283.70" width="3" height="0.8" fill="#7c7c7c" opacity="0.8"/><rect x="37" y="286.80" width="2" height="0.8" fill="#7c7c7c" opacity="0.7"/><rect x="36" y="289.90" width="3" height="0.8" fill="#7c7c7c" opacity="0.8"/><rect x="37" y="293.00" width="2" height="0.8" fill="#7c7c7c" opacity="0.7"/><rect x="29" y="296.05" width="10" height="0.9" fill="#7c7c7c"/><rect x="37" y="299.20" width="2" height="0.8" fill="#7c7c7c" opacity="0.7"/><rect x="36" y="302.30" width="3" height="0.8" fill="#7c7c7c" opacity="0.8"/><rect x="37" y="305.40" width="2" height="0.8" fill="#7c7c7c" opacity="0.7"/><rect x="36" y="308.50" width="3" height="0.8" fill="#7c7c7c" opacity="0.8"/><rect x="37" y="311.60" width="2" height="0.8" fill="#7c7c7c" opacity="0.7"/><rect x="36" y="314.70" width="3" height="0.8" fill="#7c7c7c" opacity="0.8"/><rect x="37" y="317.80" width="2" height="0.8" fill="#7c7c7c" opacity="0.7"/><rect x="36" y="320.90" width="3" height="0.8" fill="#7c7c7c" opacity="0.8"/><rect x="37" y="324.00" width="2" height="0.8" fill="#7c7c7c" opacity="0.7"/><rect x="29" y="327.05" width="10" height="0.9" fill="#7c7c7c"/><rect x="37" y="330.20" width="2" height="0.8" fill="#7c7c7c" opacity="0.7"/><rect x="36" y="333.30" width="3" height="0.8" fill="#7c7c7c" opacity="0.8"/><rect x="37" y="336.40" width="2" height="0.8" fill="#7c7c7c" opacity="0.7"/><rect x="36" y="339.50" width="3" height="0.8" fill="#7c7c7c" opacity="0.8"/><rect x="37" y="342.60" width="2" height="0.8" fill="#7c7c7c" opacity="0.7"/><rect x="36" y="345.70" width="3" height="0.8" fill="#7c7c7c" opacity="0.8"/><rect x="37" y="348.80" width="2" height="0.8" fill="#7c7c7c" opacity="0.7"/><rect x="36" y="351.90" width="3" height="0.8" fill="#7c7c7c" opacity="0.8"/><rect x="37" y="355.00" width="2" height="0.8" fill="#7c7c7c" opacity="0.7"/><rect x="29" y="358.05" width="10" height="0.9" fill="#7c7c7c"/><rect x="37" y="361.20" width="2" height="0.8" fill="#7c7c7c" opacity="0.7"/><rect x="36" y="364.30" width="3" height="0.8" fill="#7c7c7c" opacity="0.8"/><rect x="37" y="367.40" width="2" height="0.8" fill="#7c7c7c" opacity="0.7"/><rect x="36" y="370.50" width="3" height="0.8" fill="#7c7c7c" opacity="0.8"/><rect x="37" y="373.60" width="2" height="0.8" fill="#7c7c7c" opacity="0.7"/><rect x="36" y="376.70" width="3" height="0.8" fill="#7c7c7c" opacity="0.8"/><rect x="37" y="379.80" width="2" height="0.8" fill="#7c7c7c" opacity="0.7"/><rect x="36" y="382.90" width="3" height="0.8" fill="#7c7c7c" opacity="0.8"/><rect x="37" y="386.00" width="2" height="0.8" fill="#7c7c7c" opacity="0.7"/><rect x="29" y="389.05" width="10" height="0.9" fill="#7c7c7c"/><rect x="37" y="392.20" width="2" height="0.8" fill="#7c7c7c" opacity="0.7"/><rect x="36" y="395.30" width="3" height="0.8" fill="#7c7c7c" opacity="0.8"/><rect x="37" y="398.40" width="2" height="0.8" fill="#7c7c7c" opacity="0.7"/><rect x="36" y="401.50" width="3" height="0.8" fill="#7c7c7c" opacity="0.8"/><rect x="37" y="404.60" width="2" height="0.8" fill="#7c7c7c" opacity="0.7"/><rect x="36" y="407.70" width="3" height="0.8" fill="#7c7c7c" opacity="0.8"/><rect x="37" y="410.80" width="2" height="0.8" fill="#7c7c7c" opacity="0.7"/><rect x="36" y="413.90" width="3" height="0.8" fill="#7c7c7c" opacity="0.8"/><rect x="37" y="417.00" width="2" height="0.8" fill="#7c7c7c" opacity="0.7"/><rect x="29" y="420.05" width="10" height="0.9" fill="#7c7c7c"/><rect x="37" y="423.20" width="2" height="0.8" fill="#7c7c7c" opacity="0.7"/><rect x="36" y="426.30" width="3" height="0.8" fill="#7c7c7c" opacity="0.8"/><rect x="37" y="429.40" width="2" height="0.8" fill="#7c7c7c" opacity="0.7"/><rect x="36" y="432.50" width="3" height="0.8" fill="#7c7c7c" opacity="0.8"/><rect x="37" y="435.60" width="2" height="0.8" fill="#7c7c7c" opacity="0.7"/><rect x="36" y="438.70" width="3" height="0.8" fill="#7c7c7c" opacity="0.8"/><rect x="37" y="441.80" width="2" height="0.8" fill="#7c7c7c" opacity="0.7"/><rect x="36" y="444.90" width="3" height="0.8" fill="#7c7c7c" opacity="0.8"/><rect x="37" y="448.00" width="2" height="0.8" fill="#7c7c7c" opacity="0.7"/><rect x="29" y="451.05" width="10" height="0.9" fill="#7c7c7c"/><rect x="37" y="454.20" width="2" height="0.8" fill="#7c7c7c" opacity="0.7"/><rect x="36" y="457.30" width="3" height="0.8" fill="#7c7c7c" opacity="0.8"/><rect x="37" y="460.40" width="2" height="0.8" fill="#7c7c7c" opacity="0.7"/><rect x="36" y="463.50" width="3" height="0.8" fill="#7c7c7c" opacity="0.8"/><rect x="37" y="466.60" width="2" height="0.8" fill="#7c7c7c" opacity="0.7"/><rect x="36" y="469.70" width="3" height="0.8" fill="#7c7c7c" opacity="0.8"/><rect x="37" y="472.80" width="2" height="0.8" fill="#7c7c7c" opacity="0.7"/><rect x="36" y="475.90" width="3" height="0.8" fill="#7c7c7c" opacity="0.8"/><rect x="37" y="479.00" width="2" height="0.8" fill="#7c7c7c" opacity="0.7"/><rect x="29" y="482.05" width="10" height="0.9" fill="#7c7c7c"/><text x="66.8" y="59.8" font-size="6.5" textLength="6.6" lengthAdjust="spacingAndGlyphs" fill="#c6c6c6" font-family='"Liberation Sans",sans-serif'>50</text><text x="97.8" y="59.8" font-size="6.5" textLength="9.9" lengthAdjust="spacingAndGlyphs" fill="#c6c6c6" font-family='"Liberation Sans",sans-serif'>100</text><text x="128.8" y="59.8" font-size="6.5" textLength="9.9" lengthAdjust="spacingAndGlyphs" fill="#c6c6c6" font-family='"Liberation Sans",sans-serif'>150</text><text x="159.8" y="59.8" font-size="6.5" textLength="9.9" lengthAdjust="spacingAndGlyphs" fill="#c6c6c6" font-family='"Liberation Sans",sans-serif'>200</text><text x="190.8" y="59.8" font-size="6.5" textLength="9.9" lengthAdjust="spacingAndGlyphs" fill="#c6c6c6" font-family='"Liberation Sans",sans-serif'>250</text><text x="221.8" y="59.8" font-size="6.5" textLength="9.9" lengthAdjust="spacingAndGlyphs" fill="#c6c6c6" font-family='"Liberation Sans",sans-serif'>300</text><text x="252.8" y="59.8" font-size="6.5" textLength="9.9" lengthAdjust="spacingAndGlyphs" fill="#c6c6c6" font-family='"Liberation Sans",sans-serif'>350</text><text x="283.8" y="59.8" font-size="6.5" textLength="9.9" lengthAdjust="spacingAndGlyphs" fill="#c6c6c6" font-family='"Liberation Sans",sans-serif'>400</text><text x="314.8" y="59.8" font-size="6.5" textLength="9.9" lengthAdjust="spacingAndGlyphs" fill="#c6c6c6" font-family='"Liberation Sans",sans-serif'>450</text><text x="345.8" y="59.8" font-size="6.5" textLength="9.9" lengthAdjust="spacingAndGlyphs" fill="#c6c6c6" font-family='"Liberation Sans",sans-serif'>500</text><text x="376.8" y="59.8" font-size="6.5" textLength="9.9" lengthAdjust="spacingAndGlyphs" fill="#c6c6c6" font-family='"Liberation Sans",sans-serif'>550</text><text x="407.8" y="59.8" font-size="6.5" textLength="9.9" lengthAdjust="spacingAndGlyphs" fill="#c6c6c6" font-family='"Liberation Sans",sans-serif'>600</text><text x="438.8" y="59.8" font-size="6.5" textLength="9.9" lengthAdjust="spacingAndGlyphs" fill="#c6c6c6" font-family='"Liberation Sans",sans-serif'>650</text><text x="469.8" y="59.8" font-size="6.5" textLength="9.9" lengthAdjust="spacingAndGlyphs" fill="#c6c6c6" font-family='"Liberation Sans",sans-serif'>700</text><text x="500.8" y="59.8" font-size="6.5" textLength="9.9" lengthAdjust="spacingAndGlyphs" fill="#c6c6c6" font-family='"Liberation Sans",sans-serif'>750</text><text x="531.8" y="59.8" font-size="6.5" textLength="9.9" lengthAdjust="spacingAndGlyphs" fill="#c6c6c6" font-family='"Liberation Sans",sans-serif'>800</text><text x="562.8" y="59.8" font-size="6.5" textLength="9.9" lengthAdjust="spacingAndGlyphs" fill="#c6c6c6" font-family='"Liberation Sans",sans-serif'>850</text><text x="593.8" y="59.8" font-size="6.5" textLength="9.9" lengthAdjust="spacingAndGlyphs" fill="#c6c6c6" font-family='"Liberation Sans",sans-serif'>900</text><text x="624.8" y="59.8" font-size="6.5" textLength="9.9" lengthAdjust="spacingAndGlyphs" fill="#c6c6c6" font-family='"Liberation Sans",sans-serif'>950</text><text x="30.6" y="76.4" font-size="6.6" fill="#c6c6c6" font-family='"Liberation Sans",sans-serif'>1</text><text x="30.6" y="82.6" font-size="6.6" fill="#c6c6c6" font-family='"Liberation Sans",sans-serif'>0</text><text x="30.6" y="88.8" font-size="6.6" fill="#c6c6c6" font-family='"Liberation Sans",sans-serif'>0</text><text x="30.6" y="98.8" font-size="6.6" fill="#c6c6c6" font-family='"Liberation Sans",sans-serif'>0</text><text x="30.6" y="117.3" font-size="6.6" fill="#c6c6c6" font-family='"Liberation Sans",sans-serif'>1</text><text x="30.6" y="123.5" font-size="6.6" fill="#c6c6c6" font-family='"Liberation Sans",sans-serif'>5</text><text x="30.6" y="129.7" font-size="6.6" fill="#c6c6c6" font-family='"Liberation Sans",sans-serif'>0</text><text x="30.6" y="148.3" font-size="6.6" fill="#c6c6c6" font-family='"Liberation Sans",sans-serif'>2</text><text x="30.6" y="154.5" font-size="6.6" fill="#c6c6c6" font-family='"Liberation Sans",sans-serif'>0</text><text x="30.6" y="160.7" font-size="6.6" fill="#c6c6c6" font-family='"Liberation Sans",sans-serif'>0</text><text x="30.6" y="179.3" font-size="6.6" fill="#c6c6c6" font-family='"Liberation Sans",sans-serif'>2</text><text x="30.6" y="185.5" font-size="6.6" fill="#c6c6c6" font-family='"Liberation Sans",sans-serif'>5</text><text x="30.6" y="191.7" font-size="6.6" fill="#c6c6c6" font-family='"Liberation Sans",sans-serif'>0</text><text x="30.6" y="210.3" font-size="6.6" fill="#c6c6c6" font-family='"Liberation Sans",sans-serif'>3</text><text x="30.6" y="216.5" font-size="6.6" fill="#c6c6c6" font-family='"Liberation Sans",sans-serif'>0</text><text x="30.6" y="222.7" font-size="6.6" fill="#c6c6c6" font-family='"Liberation Sans",sans-serif'>0</text><text x="30.6" y="241.3" font-size="6.6" fill="#c6c6c6" font-family='"Liberation Sans",sans-serif'>3</text><text x="30.6" y="247.5" font-size="6.6" fill="#c6c6c6" font-family='"Liberation Sans",sans-serif'>5</text><text x="30.6" y="253.7" font-size="6.6" fill="#c6c6c6" font-family='"Liberation Sans",sans-serif'>0</text><text x="30.6" y="272.3" font-size="6.6" fill="#c6c6c6" font-family='"Liberation Sans",sans-serif'>4</text><text x="30.6" y="278.5" font-size="6.6" fill="#c6c6c6" font-family='"Liberation Sans",sans-serif'>0</text><text x="30.6" y="284.7" font-size="6.6" fill="#c6c6c6" font-family='"Liberation Sans",sans-serif'>0</text><text x="30.6" y="303.3" font-size="6.6" fill="#c6c6c6" font-family='"Liberation Sans",sans-serif'>4</text><text x="30.6" y="309.5" font-size="6.6" fill="#c6c6c6" font-family='"Liberation Sans",sans-serif'>5</text><text x="30.6" y="315.7" font-size="6.6" fill="#c6c6c6" font-family='"Liberation Sans",sans-serif'>0</text><text x="30.6" y="334.3" font-size="6.6" fill="#c6c6c6" font-family='"Liberation Sans",sans-serif'>5</text><text x="30.6" y="340.5" font-size="6.6" fill="#c6c6c6" font-family='"Liberation Sans",sans-serif'>0</text><text x="30.6" y="346.7" font-size="6.6" fill="#c6c6c6" font-family='"Liberation Sans",sans-serif'>0</text><text x="30.6" y="365.3" font-size="6.6" fill="#c6c6c6" font-family='"Liberation Sans",sans-serif'>5</text><text x="30.6" y="371.5" font-size="6.6" fill="#c6c6c6" font-family='"Liberation Sans",sans-serif'>5</text><text x="30.6" y="377.7" font-size="6.6" fill="#c6c6c6" font-family='"Liberation Sans",sans-serif'>0</text><text x="30.6" y="396.3" font-size="6.6" fill="#c6c6c6" font-family='"Liberation Sans",sans-serif'>6</text><text x="30.6" y="402.5" font-size="6.6" fill="#c6c6c6" font-family='"Liberation Sans",sans-serif'>0</text><text x="30.6" y="408.7" font-size="6.6" fill="#c6c6c6" font-family='"Liberation Sans",sans-serif'>0</text><text x="30.6" y="427.3" font-size="6.6" fill="#c6c6c6" font-family='"Liberation Sans",sans-serif'>6</text><text x="30.6" y="433.5" font-size="6.6" fill="#c6c6c6" font-family='"Liberation Sans",sans-serif'>5</text><text x="30.6" y="439.7" font-size="6.6" fill="#c6c6c6" font-family='"Liberation Sans",sans-serif'>0</text><text x="30.6" y="458.3" font-size="6.6" fill="#c6c6c6" font-family='"Liberation Sans",sans-serif'>7</text><text x="30.6" y="464.5" font-size="6.6" fill="#c6c6c6" font-family='"Liberation Sans",sans-serif'>0</text><text x="30.6" y="470.7" font-size="6.6" fill="#c6c6c6" font-family='"Liberation Sans",sans-serif'>0</text></svg>
</body></html>
